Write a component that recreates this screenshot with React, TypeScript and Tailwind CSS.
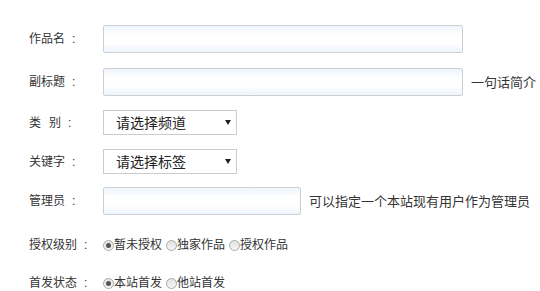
import React from 'react';

const font = { fontFamily: '"Liberation Sans", "Noto Sans CJK SC", sans-serif' };

function Label({ children }: { children: React.ReactNode }) {
  return (
    <div className="w-[74px] shrink-0 text-[12px] leading-none text-[#333]">
      {children}
      <span className="ml-[7px]">:</span>
    </div>
  );
}

function TextInput({ w }: { w: string }) {
  return (
    <div
      className={`${w} h-[28px] rounded-[2px] border border-[#cfcfcf] bg-[linear-gradient(to_bottom,#edf5fd,#ffffff_35%,#ffffff_65%,#edf5fd)]`}
    />
  );
}

function Select({ text }: { text: string }) {
  return (
    <div className="flex h-[25px] w-[134px] items-center justify-between border border-[#cccccc] bg-white pl-[12px] pr-[5px]">
      <span className="text-[14px] leading-none text-[#222]">{text}</span>
      <svg width="6" height="5" viewBox="0 0 6 5">
        <path d="M0 0H6L3 5Z" fill="#222" />
      </svg>
    </div>
  );
}

function Radio({ label, checked }: { label: string; checked?: boolean }) {
  return (
    <span className="mr-[4px] flex items-center text-[12px] leading-none text-[#333]">
      <span className="flex h-[11px] w-[11px] items-center justify-center rounded-full border border-[#a9a9a9] bg-[linear-gradient(to_bottom,#e2e2e2,#f6f6f6)]">
        {checked && <span className="h-[5px] w-[5px] rounded-full bg-[#555]" />}
      </span>
      {label}
    </span>
  );
}

export default function App() {
  return (
    <div className="h-[291px] w-[540px] bg-white pl-[29px]" style={font}>
      <div className="flex flex-col">
        <div className="mt-[25px] flex items-center">
          <Label>作品名</Label>
          <TextInput w="w-[360px]" />
        </div>
        <div className="mt-[15px] flex items-center">
          <Label>副标题</Label>
          <TextInput w="w-[360px]" />
          <span className="ml-[8px] text-[13px] leading-none text-[#333]">一句话简介</span>
        </div>
        <div className="mt-[14px] flex items-center">
          <Label>
            类<span className="ml-[8px]">别</span>
          </Label>
          <Select text="请选择频道" />
        </div>
        <div className="mt-[14px] flex items-center">
          <Label>关键字</Label>
          <Select text="请选择标签" />
        </div>
        <div className="mt-[13px] flex items-center">
          <Label>管理员</Label>
          <TextInput w="w-[198px]" />
          <span className="ml-[8px] text-[13px] leading-none text-[#333]">可以指定一个本站现有用户作为管理员</span>
        </div>
        <div className="mt-[20px] flex h-[20px] items-center">
          <Label>授权级别</Label>
          <Radio label="暂未授权" checked />
          <Radio label="独家作品" />
          <Radio label="授权作品" />
        </div>
        <div className="mt-[18px] flex h-[20px] items-center">
          <Label>首发状态</Label>
          <Radio label="本站首发" checked />
          <Radio label="他站首发" />
        </div>
      </div>
    </div>
  );
}
